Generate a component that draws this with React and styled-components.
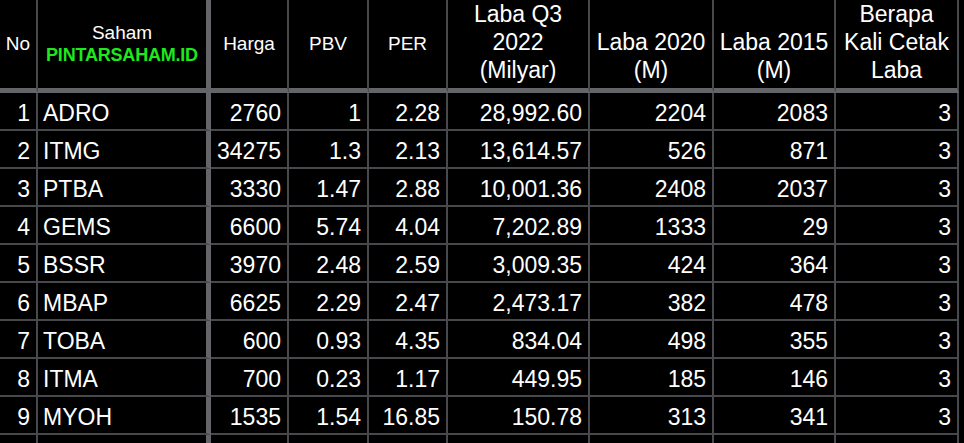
import React from "react";
import styled, { createGlobalStyle } from "styled-components";

const Global = createGlobalStyle`
  html, body {
    margin: 0;
    padding: 0;
    background: #000;
    overflow: hidden;
  }
  body {
    font-family: "Liberation Sans", Arial, sans-serif;
    color: #fff;
  }
`;

const THIN = "#48494d";
const THICK = "#646569";

const Table = styled.div`
  display: grid;
  grid-template-columns: 38px 173px 78px 80px 79px 142px 124px 122px 123px;
  grid-template-rows: 93px;
  grid-auto-rows: 38px;
  width: 964px;
  height: 443px;
  overflow: hidden;
  background: #000;
`;

const HeadCell = styled.div`
  box-sizing: border-box;
  display: flex;
  flex-direction: column;
  align-items: center;
  justify-content: ${(p) => (p.$valign === "bottom" ? "flex-end" : p.$valign === "top" ? "flex-start" : "center")};
  padding-bottom: ${(p) => (p.$valign === "bottom" ? "4px" : "0")};
  padding-top: ${(p) => (p.$valign === "top" ? "0" : "0")};
  text-align: center;
  font-size: ${(p) => (p.$big ? "23px" : "19px")};
  line-height: ${(p) => (p.$big ? "28px" : "22px")};
  border-right: ${(p) => (p.$thick ? `5px solid ${THICK}` : `2px solid ${THIN}`)};
  border-bottom: 5px solid ${THICK};
  white-space: nowrap;
  color: #fff;
`;

const Brand = styled.span`
  color: #1ee81e;
  font-weight: 700;
  font-size: 18px;
  letter-spacing: -0.2px;
`;

const Cell = styled.div`
  box-sizing: border-box;
  padding: 4px ${(p) => (p.$align === "left" ? "0" : "6px")} 0 ${(p) => (p.$align === "left" ? "5px" : "0")};
  font-size: 23px;
  line-height: 32px;
  text-align: ${(p) => p.$align};
  border-right: ${(p) => (p.$thick ? `5px solid ${THICK}` : `2px solid ${THIN}`)};
  border-bottom: 2px solid ${THIN};
  white-space: nowrap;
  overflow: hidden;
  color: #fff;
`;

const columns = [
  { align: "right" },
  { align: "left", thick: true },
  { align: "right" },
  { align: "right" },
  { align: "right" },
  { align: "right" },
  { align: "right" },
  { align: "right" },
  { align: "right" },
];

const rows = [
  ["1", "ADRO", "2760", "1", "2.28", "28,992.60", "2204", "2083", "3"],
  ["2", "ITMG", "34275", "1.3", "2.13", "13,614.57", "526", "871", "3"],
  ["3", "PTBA", "3330", "1.47", "2.88", "10,001.36", "2408", "2037", "3"],
  ["4", "GEMS", "6600", "5.74", "4.04", "7,202.89", "1333", "29", "3"],
  ["5", "BSSR", "3970", "2.48", "2.59", "3,009.35", "424", "364", "3"],
  ["6", "MBAP", "6625", "2.29", "2.47", "2,473.17", "382", "478", "3"],
  ["7", "TOBA", "600", "0.93", "4.35", "834.04", "498", "355", "3"],
  ["8", "ITMA", "700", "0.23", "1.17", "449.95", "185", "146", "3"],
  ["9", "MYOH", "1535", "1.54", "16.85", "150.78", "313", "341", "3"],
  ["", "", "", "", "", "", "", "", ""],
];

export default function App() {
  return (
    <>
      <Global />
      <Table>
        <HeadCell>No</HeadCell>
        <HeadCell $thick>
          <span>Saham</span>
          <Brand>PINTARSAHAM.ID</Brand>
        </HeadCell>
        <HeadCell>Harga</HeadCell>
        <HeadCell>PBV</HeadCell>
        <HeadCell>PER</HeadCell>
        <HeadCell $big $valign="top">
          <span>Laba Q3</span>
          <span>2022</span>
          <span>(Milyar)</span>
        </HeadCell>
        <HeadCell $big $valign="bottom">
          <span>Laba 2020</span>
          <span>(M)</span>
        </HeadCell>
        <HeadCell $big $valign="bottom">
          <span>Laba 2015</span>
          <span>(M)</span>
        </HeadCell>
        <HeadCell $big $valign="top">
          <span>Berapa</span>
          <span>Kali Cetak</span>
          <span>Laba</span>
        </HeadCell>
        {rows.map((row, ri) =>
          row.map((v, ci) => (
            <Cell key={`${ri}-${ci}`} $align={columns[ci].align} $thick={columns[ci].thick}>
              {v}
            </Cell>
          ))
        )}
      </Table>
    </>
  );
}
